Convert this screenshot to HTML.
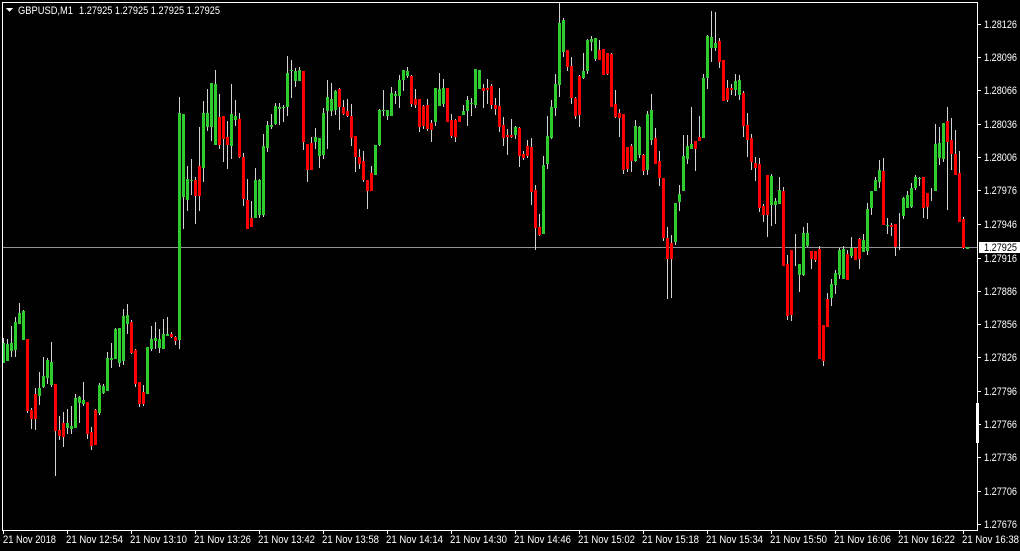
<!DOCTYPE html>
<html><head><meta charset="utf-8"><title>GBPUSD,M1</title>
<style>
html,body{margin:0;padding:0;background:#000;width:1020px;height:551px;overflow:hidden}
svg{display:block}
text{font-family:"Liberation Sans",sans-serif;font-size:11px;fill:#fff}
</style></head><body>
<svg width="1020" height="551" viewBox="0 0 1020 551" xmlns="http://www.w3.org/2000/svg">
<rect width="1020" height="551" fill="#000"/>
<g shape-rendering="crispEdges">
<path fill="none" stroke="#8f959b" stroke-width="1" d="M3 247.5H977"/>
<path fill="none" stroke="#d3d3d3" stroke-width="1" d="M3.5 338V363M7.5 339V361M11.5 326V357M15.5 317V357M19.5 303V324M23.5 310V340M27.5 339V413M31.5 408V429M35.5 388V430M39.5 372V405M43.5 357V388M47.5 358V384M51.5 342V387M55.5 384V476M59.5 416V440M63.5 412V447M67.5 409V434M71.5 406V434M75.5 394V428M79.5 396V423M83.5 382V406M87.5 402V439M91.5 427V450M95.5 409V445M99.5 383V415M103.5 384V394M107.5 352V391M111.5 343V368M115.5 328V359M119.5 328V367M123.5 309V365M127.5 304V334M131.5 320V354M135.5 349V387M139.5 382V407M143.5 385V406M151.5 326V351M155.5 322V349M159.5 329V353M163.5 319V349M167.5 317V336M171.5 332V338M175.5 336V345M179.5 97V349M183.5 114V229M187.5 166V211M191.5 159V195M195.5 177V224M199.5 127V211M203.5 101V182M207.5 89V131M211.5 83V141M215.5 70V145M219.5 94V149M223.5 116V162M227.5 121V169M231.5 84V159M235.5 100V126M239.5 113V158M243.5 153V206M247.5 179V229M251.5 201V227M255.5 168V218M259.5 179V218M263.5 134V217M267.5 121V152M271.5 114V129M275.5 103V125M279.5 103V125M283.5 105V122M287.5 56V116M291.5 60V98M295.5 68V87M299.5 67V81M303.5 71V150M307.5 144V182M311.5 137V170M315.5 128V149M319.5 138V168M323.5 108V159M327.5 80V149M331.5 83V116M335.5 90V115M339.5 88V130M343.5 100V115M347.5 99V117M351.5 104V146M355.5 136V172M359.5 149V169M363.5 151V182M367.5 180V209M371.5 166V191M379.5 109V146M383.5 90V116M387.5 110V120M391.5 87V116M395.5 91V104M399.5 75V108M403.5 70V91M407.5 67V78M411.5 75V107M415.5 89V108M419.5 99V132M423.5 105V129M427.5 99V131M431.5 120V142M435.5 88V126M439.5 73V106M443.5 79V107M447.5 88V122M451.5 114V138M455.5 119V142M463.5 105V115M467.5 96V126M471.5 98V116M475.5 69V108M483.5 84V108M487.5 79V104M491.5 84V109M495.5 98V115M499.5 88V132M503.5 117V146M507.5 129V155M511.5 119V138M515.5 126V139M519.5 127V167M523.5 151V160M527.5 140V158M531.5 138V205M535.5 185V250M539.5 214V236M543.5 156V234M547.5 116V169M551.5 100V139M555.5 74V116M559.5 3V97M563.5 18V57M567.5 50V71M571.5 57V104M575.5 97V119M579.5 75V127M583.5 53V79M587.5 39V74M591.5 36V51M595.5 38V61M599.5 40V60M607.5 53V75M611.5 53V107M615.5 90V118M619.5 109V137M623.5 114V174M627.5 147V172M631.5 144V172M635.5 120V162M639.5 126V158M643.5 154V175M647.5 111V175M651.5 94V145M655.5 128V164M659.5 151V186M663.5 178V241M667.5 227V299M671.5 235V298M675.5 203V245M679.5 185V211M683.5 135V191M687.5 135V164M691.5 107V149M695.5 141V171M699.5 116V141M703.5 74V138M707.5 35V89M711.5 11V62M715.5 12V51M719.5 38V68M727.5 80V102M731.5 84V95M735.5 74V96M739.5 75V100M743.5 91V137M747.5 113V157M751.5 134V170M755.5 157V181M759.5 158V212M763.5 204V222M767.5 175V237M771.5 174V226M775.5 198V224M779.5 177V204M783.5 187V191M787.5 255V320M791.5 250V321M795.5 234V266M799.5 264V292M803.5 227V276M807.5 223V247M811.5 251V269M815.5 251V262M819.5 246V359M823.5 325V366M827.5 293V327M831.5 279V306M835.5 270V294M839.5 248V279M843.5 246V279M847.5 250V280M851.5 237V258M859.5 238V269M863.5 234V252M867.5 203V255M871.5 191V215M875.5 177V191M879.5 160V188M883.5 158V225M887.5 218V234M891.5 223V236M895.5 224V256M899.5 213V250M903.5 197V219M907.5 191V208M911.5 183V208M915.5 175V190M919.5 177V186M923.5 177V218M927.5 193V219M931.5 188V201M935.5 124V191M939.5 127V165M943.5 123V162M947.5 107V210M951.5 118V170M955.5 130V175M959.5 151V222M963.5 217V249M967.5 247V249"/>
<path fill="none" stroke="#2ecc2e" stroke-width="3" d="M3.5 343V363M7.5 344V361M11.5 343V351M15.5 322V350M19.5 313V324M23.5 311V340M39.5 388V396M43.5 376V387M47.5 360V378M51.5 362V385M67.5 423V428M71.5 426V429M75.5 398V428M79.5 397V403M83.5 400V404M99.5 385V413M103.5 386V393M107.5 358V391M111.5 358V360M115.5 329V359M119.5 328V363M123.5 316V361M127.5 315V324M147.5 347V394M151.5 339V349M155.5 338V341M159.5 339V348M163.5 334V349M167.5 334V336M179.5 113V340M183.5 114V197M187.5 179V200M191.5 180V181M203.5 113V168M207.5 113V127M211.5 83V127M215.5 84V145M231.5 114V146M235.5 116V120M255.5 180V218M259.5 180V215M263.5 146V215M267.5 125V148M271.5 125V127M275.5 106V124M279.5 107V109M283.5 107V108M287.5 73V107M291.5 70V71M295.5 71V81M299.5 70V81M315.5 137V142M319.5 138V156M323.5 113V155M327.5 97V111M331.5 99V111M335.5 91V110M375.5 145V175M379.5 110V145M383.5 110V111M387.5 110V116M391.5 93V116M395.5 94V96M399.5 80V96M403.5 70V80M407.5 71V76M435.5 88V122M439.5 89V106M443.5 88V104M463.5 111V115M467.5 100V111M471.5 103V104M475.5 69V105M479.5 70V89M515.5 127V135M543.5 165V234M547.5 136V164M551.5 107V138M555.5 84V108M559.5 23V85M563.5 20V52M583.5 71V78M587.5 40V71M591.5 39V42M595.5 38V59M635.5 126V161M639.5 127V155M647.5 114V170M651.5 110V140M675.5 203V242M679.5 194V202M683.5 156V191M687.5 146V159M691.5 144V149M703.5 78V138M707.5 36V78M711.5 37V48M715.5 43V48M735.5 81V90M739.5 80V95M771.5 176V205M775.5 201V205M779.5 190V204M799.5 264V275M803.5 233V275M807.5 233V246M831.5 284V298M835.5 273V285M839.5 250V275M843.5 249V279M851.5 248V256M863.5 240V252M867.5 209V251M871.5 191V208M875.5 180V191M879.5 170V182M887.5 225V226M903.5 198V216M907.5 195V208M911.5 188V207M915.5 177V188M919.5 178V179M935.5 144V191M939.5 143V158M943.5 123V159M967.5 247V249"/>
<path fill="none" stroke="#ff0000" stroke-width="3" d="M27.5 339V411M31.5 410V419M35.5 394V419M55.5 384V431M59.5 430V436M63.5 423V437M87.5 402V434M91.5 432V446M95.5 410V445M131.5 322V353M135.5 350V384M139.5 382V404M143.5 392V404M171.5 334V337M175.5 337V341M195.5 180V196M199.5 166V196M219.5 117V145M223.5 116V139M227.5 137V145M239.5 119V157M243.5 157V199M247.5 200V229M251.5 218V227M303.5 71V142M307.5 144V170M311.5 143V170M339.5 89V107M343.5 107V114M347.5 111V116M351.5 116V138M355.5 136V157M359.5 157V164M363.5 161V180M367.5 180V191M371.5 173V191M411.5 76V104M415.5 99V105M419.5 99V127M423.5 106V126M427.5 105V129M431.5 123V130M447.5 88V122M451.5 120V136M455.5 120V137M459.5 116V122M483.5 88V91M487.5 88V90M491.5 86V105M495.5 105V109M499.5 106V127M503.5 125V138M507.5 135V137M511.5 135V137M519.5 128V156M523.5 154V158M527.5 146V156M531.5 147V192M535.5 190V228M539.5 227V235M567.5 50V67M571.5 66V98M575.5 98V116M579.5 76V115M599.5 50V60M603.5 49V75M607.5 53V74M611.5 54V107M615.5 104V117M619.5 113V118M623.5 114V170M627.5 147V169M631.5 146V161M643.5 155V171M655.5 138V164M659.5 161V178M663.5 178V238M667.5 238V259M671.5 243V259M695.5 141V149M699.5 137V141M719.5 41V62M723.5 60V101M727.5 88V100M731.5 88V90M743.5 93V126M747.5 125V140M751.5 138V162M755.5 163V168M759.5 164V208M763.5 206V215M767.5 175V215M783.5 191V266M787.5 264V316M791.5 250V315M811.5 251V259M815.5 251V260M819.5 249V359M823.5 325V361M827.5 299V327M847.5 254V280M855.5 248V260M859.5 239V259M883.5 171V225M891.5 225V227M895.5 224V247M923.5 177V208M927.5 193V207M947.5 121V142M951.5 140V154M955.5 154V175M959.5 173V222M963.5 219V248"/>
<path fill="none" stroke="#fff" stroke-width="1" d="M2.5 2V531M2 2.5H978M977.5 2V531M2 530.5H978"/>
<path fill="none" stroke="#fff" stroke-width="3" d="M977.5 403V443"/>
<path fill="none" stroke="#fff" stroke-width="1" d="M978 24.5H981M978 57.5H981M978 90.5H981M978 124.5H981M978 157.5H981M978 190.5H981M978 224.5H981M978 258.5H981M978 291.5H981M978 324.5H981M978 357.5H981M978 391.5H981M978 424.5H981M978 457.5H981M978 491.5H981M978 524.5H981"/>
<path fill="none" stroke="#fff" stroke-width="1" d="M3.5 531V534M67.5 531V534M131.5 531V534M195.5 531V534M259.5 531V534M323.5 531V534M387.5 531V534M451.5 531V534M515.5 531V534M579.5 531V534M643.5 531V534M707.5 531V534M771.5 531V534M835.5 531V534M899.5 531V534M963.5 531V534"/>
<rect x="979" y="242" width="41" height="11" fill="#fff"/>
<path fill="#fff" d="M6 8H13L9.5 12Z"/>
</g>
<text x="18" y="14" textLength="55" lengthAdjust="spacingAndGlyphs">GBPUSD,M1</text>
<text x="79" y="14" textLength="141" lengthAdjust="spacingAndGlyphs">1.27925 1.27925 1.27925 1.27925</text>
<g>
<text x="984" y="28" textLength="33" lengthAdjust="spacingAndGlyphs">1.28126</text>
<text x="984" y="61" textLength="33" lengthAdjust="spacingAndGlyphs">1.28096</text>
<text x="984" y="94" textLength="33" lengthAdjust="spacingAndGlyphs">1.28066</text>
<text x="984" y="128" textLength="33" lengthAdjust="spacingAndGlyphs">1.28036</text>
<text x="984" y="161" textLength="33" lengthAdjust="spacingAndGlyphs">1.28006</text>
<text x="984" y="194" textLength="33" lengthAdjust="spacingAndGlyphs">1.27976</text>
<text x="984" y="228" textLength="33" lengthAdjust="spacingAndGlyphs">1.27946</text>
<text x="984" y="251" textLength="33" lengthAdjust="spacingAndGlyphs" style="fill:#000">1.27925</text>
<text x="984" y="262" textLength="33" lengthAdjust="spacingAndGlyphs">1.27916</text>
<text x="984" y="295" textLength="33" lengthAdjust="spacingAndGlyphs">1.27886</text>
<text x="984" y="328" textLength="33" lengthAdjust="spacingAndGlyphs">1.27856</text>
<text x="984" y="361" textLength="33" lengthAdjust="spacingAndGlyphs">1.27826</text>
<text x="984" y="395" textLength="33" lengthAdjust="spacingAndGlyphs">1.27796</text>
<text x="984" y="428" textLength="33" lengthAdjust="spacingAndGlyphs">1.27766</text>
<text x="984" y="461" textLength="33" lengthAdjust="spacingAndGlyphs">1.27736</text>
<text x="984" y="495" textLength="33" lengthAdjust="spacingAndGlyphs">1.27706</text>
<text x="984" y="528" textLength="33" lengthAdjust="spacingAndGlyphs">1.27676</text>
</g>
<g>
<text x="3" y="543" textLength="53" lengthAdjust="spacingAndGlyphs">21 Nov 2018</text>
<text x="66" y="543" textLength="57" lengthAdjust="spacingAndGlyphs">21 Nov 12:54</text>
<text x="130" y="543" textLength="57" lengthAdjust="spacingAndGlyphs">21 Nov 13:10</text>
<text x="194" y="543" textLength="57" lengthAdjust="spacingAndGlyphs">21 Nov 13:26</text>
<text x="258" y="543" textLength="57" lengthAdjust="spacingAndGlyphs">21 Nov 13:42</text>
<text x="322" y="543" textLength="57" lengthAdjust="spacingAndGlyphs">21 Nov 13:58</text>
<text x="386" y="543" textLength="57" lengthAdjust="spacingAndGlyphs">21 Nov 14:14</text>
<text x="450" y="543" textLength="57" lengthAdjust="spacingAndGlyphs">21 Nov 14:30</text>
<text x="514" y="543" textLength="57" lengthAdjust="spacingAndGlyphs">21 Nov 14:46</text>
<text x="578" y="543" textLength="57" lengthAdjust="spacingAndGlyphs">21 Nov 15:02</text>
<text x="642" y="543" textLength="57" lengthAdjust="spacingAndGlyphs">21 Nov 15:18</text>
<text x="706" y="543" textLength="57" lengthAdjust="spacingAndGlyphs">21 Nov 15:34</text>
<text x="770" y="543" textLength="57" lengthAdjust="spacingAndGlyphs">21 Nov 15:50</text>
<text x="834" y="543" textLength="57" lengthAdjust="spacingAndGlyphs">21 Nov 16:06</text>
<text x="898" y="543" textLength="57" lengthAdjust="spacingAndGlyphs">21 Nov 16:22</text>
<text x="962" y="543" textLength="57" lengthAdjust="spacingAndGlyphs">21 Nov 16:38</text>
</g>
</svg>
</body></html>
